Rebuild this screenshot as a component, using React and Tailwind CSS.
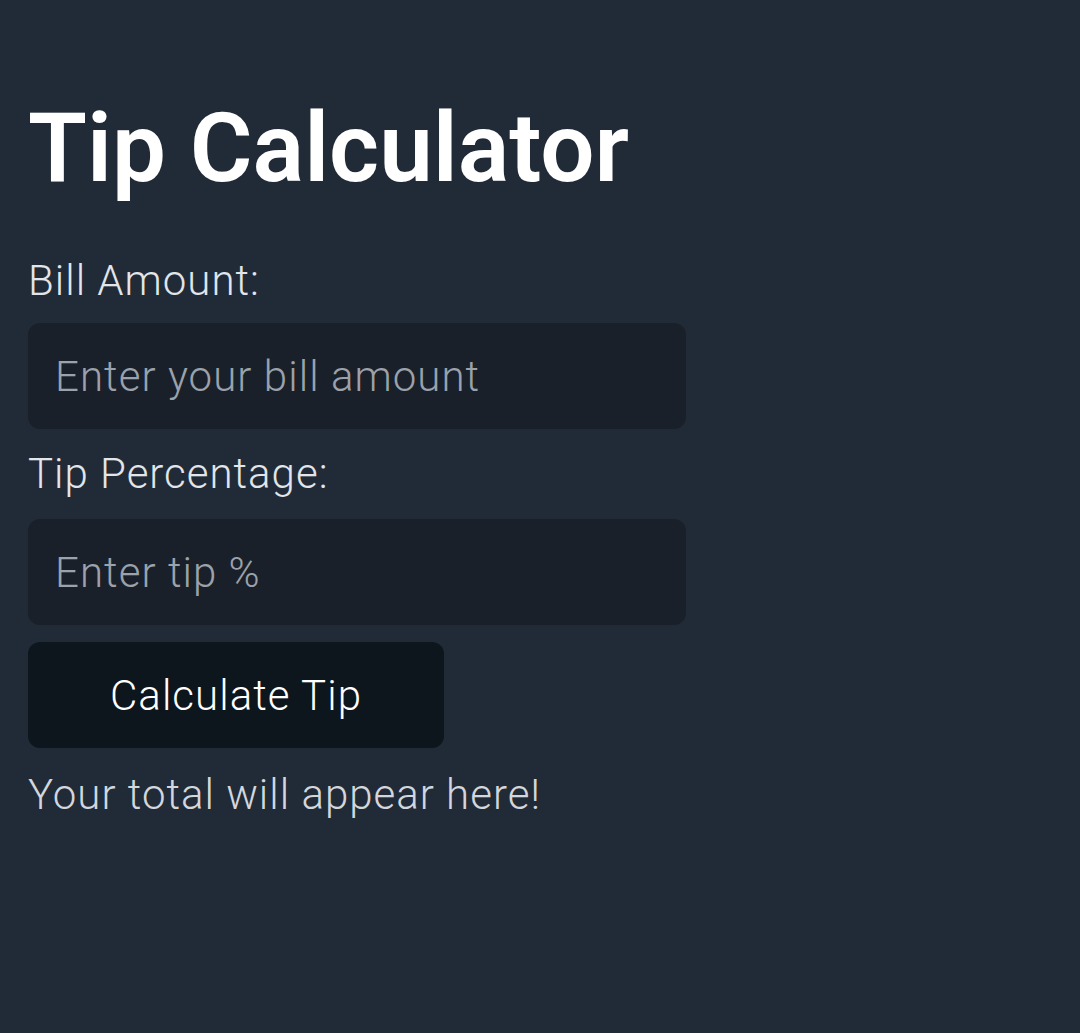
import { useState } from 'react';

export default function App() {
  const [bill, setBill] = useState('');
  const [tip, setTip] = useState('');
  const [result, setResult] = useState('Your total will appear here!');

  const calculate = () => {
    const b = parseFloat(bill);
    const t = parseFloat(tip);
    if (isNaN(b) || isNaN(t)) return;
    setResult(`Total: $${(b + (b * t) / 100).toFixed(2)}`);
  };

  return (
    <div className="min-h-screen bg-[#212b37] px-7 pt-[100px] font-['Roboto',sans-serif]">
      <h1 className="text-[96px] leading-[96px] font-semibold text-white">Tip Calculator</h1>

      <div className="mt-[60px] w-[658px] flex flex-col">
        <label className="text-[42px] leading-[49px] font-light tracking-[1px] text-[#e2e5ea]">Bill Amount:</label>
        <input
          type="number"
          value={bill}
          onChange={(e) => setBill(e.target.value)}
          placeholder="Enter your bill amount"
          className="mt-[18px] h-[106px] rounded-xl bg-[#1a2029] pl-[27px] pr-7 text-[42px] font-light tracking-wide text-white placeholder:text-[#9ba2ab] outline-none"
        />

        <label className="mt-5 text-[42px] leading-[49px] font-light tracking-[1px] text-[#e2e5ea]">Tip Percentage:</label>
        <input
          type="number"
          value={tip}
          onChange={(e) => setTip(e.target.value)}
          placeholder="Enter tip %"
          className="mt-[21px] h-[106px] rounded-xl bg-[#1a2029] pl-[27px] pr-7 text-[42px] font-light tracking-wide text-white placeholder:text-[#9ba2ab] outline-none"
        />

        <button
          onClick={calculate}
          className="mt-[17px] w-[416px] h-[106px] rounded-xl bg-[#0d151d] text-[42px] font-light tracking-wide text-white"
        >
          Calculate Tip
        </button>

        <p className="mt-[22px] text-[42px] leading-[49px] font-light tracking-[1px] text-[#d3d7dd]">{result}</p>
      </div>
    </div>
  );
}
